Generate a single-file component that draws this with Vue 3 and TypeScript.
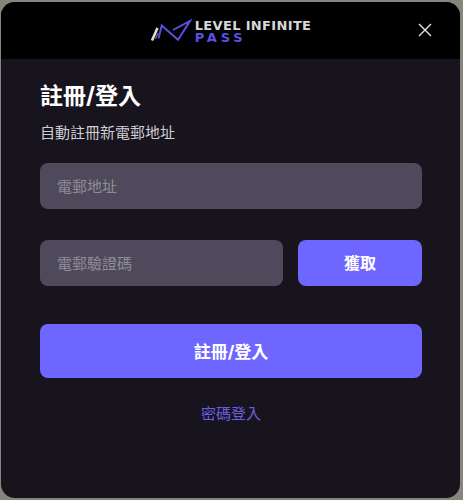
<script setup lang="ts">
const title = '註冊/登入'
const subtitle = '自動註冊新電郵地址'
</script>

<template>
  <div class="page">
    <div class="modal">
      <header class="head">
        <div class="logo">
          <svg class="mark" width="42" height="24" viewBox="0 0 42 24" fill="none">
            <path d="M2 21.5 L7.5 9" stroke="#dcdcdc" stroke-width="2.6" />
            <path d="M5.5 20 L8 14" stroke="#6f6f6f" stroke-width="1.2" />
            <path d="M8.5 19.5 L11.7 6.5 L28 20.7 L40 2 L23 11" stroke="#5a52e6" stroke-width="1.9" stroke-linejoin="miter" />
          </svg>
          <div class="words">
            <span class="li">LEVEL INFINITE</span>
            <span class="pass">PASS</span>
          </div>
        </div>
        <button class="close" aria-label="close">
          <svg width="14" height="14" viewBox="0 0 14 14" fill="none">
            <path d="M1 1 L13 13 M13 1 L1 13" stroke="#e6e6e6" stroke-width="1.4" />
          </svg>
        </button>
      </header>
      <main class="body">
        <h1 class="title">{{ title }}</h1>
        <p class="sub">{{ subtitle }}</p>
        <div class="field full">電郵地址</div>
        <div class="row">
          <div class="field code">電郵驗證碼</div>
          <button class="btn get">獲取</button>
        </div>
        <button class="btn submit">註冊/登入</button>
        <a class="link">密碼登入</a>
      </main>
    </div>
  </div>
</template>

<style>
html, body { margin: 0; background: #85857c; }
</style>

<style scoped>
.page {
  width: 463px;
  height: 500px;
  box-sizing: border-box;
  padding: 2px 3px 2px 1px;
  background: #85857c;
  font-family: Inter, "Noto Sans CJK TC", sans-serif;
}
.modal {
  height: 100%;
  border-radius: 14px;
  overflow: hidden;
  background: #17141e;
  display: flex;
  flex-direction: column;
}
.head {
  height: 57px;
  flex: none;
  background: #000;
  position: relative;
  display: flex;
  align-items: center;
  justify-content: center;
}
.logo { display: flex; align-items: center; gap: 3px; }
.mark { margin-top: 1px; }
.words { display: flex; flex-direction: column; font-family: "DejaVu Sans", sans-serif; line-height: 12px; margin-top: 2px; }
.li { font-size: 13px; font-weight: 700; color: #d8d8d8; letter-spacing: 0.35px; white-space: nowrap; }
.pass { font-size: 13px; font-weight: 700; color: #5a52e6; letter-spacing: 3.8px; }
.close {
  position: absolute;
  right: 28px;
  top: 21px;
  padding: 0;
  border: 0;
  background: none;
  display: flex;
}
.body { padding: 0 38px 0 39px; display: flex; flex-direction: column; }
.title { margin: 22px 0 0; font-size: 23px; line-height: 30px; font-weight: 700; color: #fff; }
.sub { margin: 12px 0 0; font-size: 15px; line-height: 20px; color: #cfcdd3; }
.field {
  height: 46px;
  box-sizing: border-box;
  padding: 0 17px 2px;
  border-radius: 8px;
  background: #4f4a5b;
  color: #8f8c98;
  font-size: 15px;
  display: flex;
  align-items: center;
}
.full { margin-top: 20px; }
.row { display: flex; gap: 15px; margin-top: 31px; }
.code { flex: 1; }
.btn {
  border: 0;
  border-radius: 8px;
  background: #6f66ff;
  color: #fff;
  font-family: inherit;
  font-weight: 700;
  font-size: 16px;
  padding: 0 0 2px;
}
.get { width: 124px; height: 46px; }
.submit { height: 54px; margin-top: 38px; font-size: 17px; }
.link { margin-top: 26px; text-align: center; font-size: 15px; line-height: 20px; color: #6a5fe0; }
</style>
